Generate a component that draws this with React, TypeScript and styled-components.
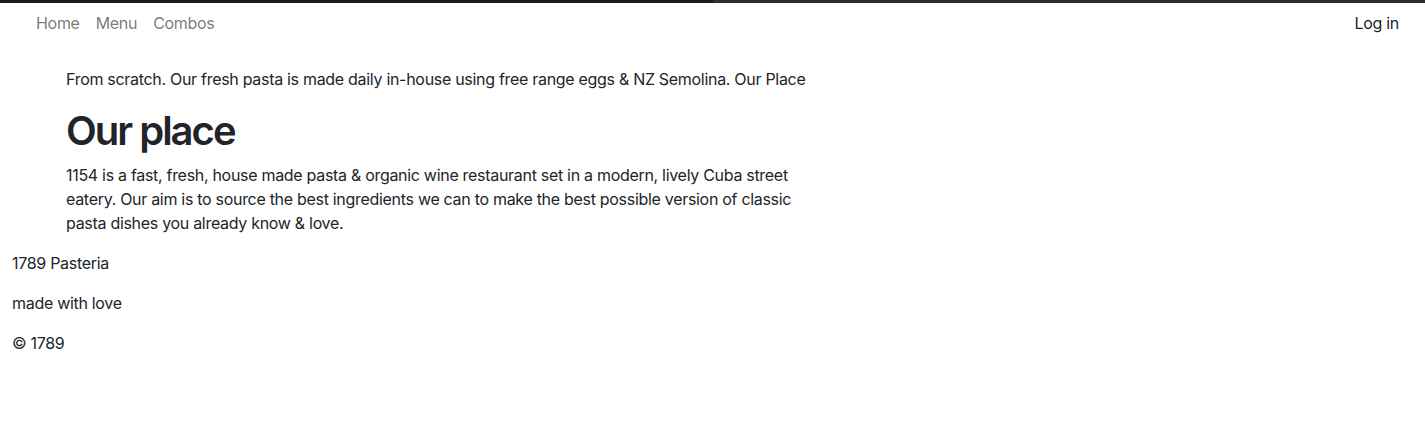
import React from "react";
import styled, { createGlobalStyle } from "styled-components";

const Global = createGlobalStyle`
  html, body { margin: 0; padding: 0; background: #fff; }
  body {
    font-family: Inter, "Noto Sans", "Liberation Sans", sans-serif;
    font-size: 16px;
    line-height: 24px;
    letter-spacing: -0.3px;
    color: #212529;
  }
  * { box-sizing: border-box; }
`;

const TopStrip = styled.div`
  display: flex;
  height: 3px;
`;

const StripPart = styled.div<{ $grow: number; $color: string }>`
  flex: ${(p) => p.$grow} 0 0;
  background: ${(p) => p.$color};
`;

const Nav = styled.nav`
  display: flex;
  align-items: center;
  justify-content: space-between;
  height: 40px;
  padding: 0 18px 0 28px;
`;

const NavLinks = styled.ul`
  display: flex;
  list-style: none;
  margin: 0;
  padding: 0;
`;

const NavLink = styled.a<{ $strong?: boolean }>`
  display: block;
  padding: 8px;
  color: ${(p) => (p.$strong ? "rgba(0,0,0,0.9)" : "rgba(0,0,0,0.55)")};
  text-decoration: none;
  font-size: 16px;
  line-height: 24px;
`;

const Main = styled.main`
  padding: 24px 0 0 66px;
`;

const Content = styled.section`
  max-width: 762px;
`;

const Lead = styled.p`
  margin: 0 0 16px;
`;

const Title = styled.h1`
  margin: 0 0 8px;
  font-size: 40px;
  line-height: 48px;
  font-weight: 600;
  letter-spacing: -2px;
`;

const Body = styled.p`
  margin: 0 0 16px;
`;

const Footer = styled.footer`
  padding: 0 12px;
`;

const FooterLine = styled.p`
  margin: 0 0 16px;
`;

export default function App() {
  return (
    <>
      <Global />
      <TopStrip>
        <StripPart $grow={713} $color="#1b1a1e" />
        <StripPart $grow={712} $color="#2e2c33" />
      </TopStrip>
      <Nav>
        <NavLinks>
          <li><NavLink href="#">Home</NavLink></li>
          <li><NavLink href="#">Menu</NavLink></li>
          <li><NavLink href="#">Combos</NavLink></li>
        </NavLinks>
        <NavLink href="#" $strong>Log in</NavLink>
      </Nav>
      <Main>
        <Content>
          <Lead>
            From scratch. Our fresh pasta is made daily in-house using free range eggs &amp; NZ Semolina. Our Place
          </Lead>
          <Title>Our place</Title>
          <Body>
            1154 is a fast, fresh, house made pasta &amp; organic wine restaurant set in a modern, lively Cuba street
            eatery. Our aim is to source the best ingredients we can to make the best possible version of classic
            pasta dishes you already know &amp; love.
          </Body>
        </Content>
      </Main>
      <Footer>
        <FooterLine>1789 Pasteria</FooterLine>
        <FooterLine>made with love</FooterLine>
        <FooterLine>© 1789</FooterLine>
      </Footer>
    </>
  );
}
